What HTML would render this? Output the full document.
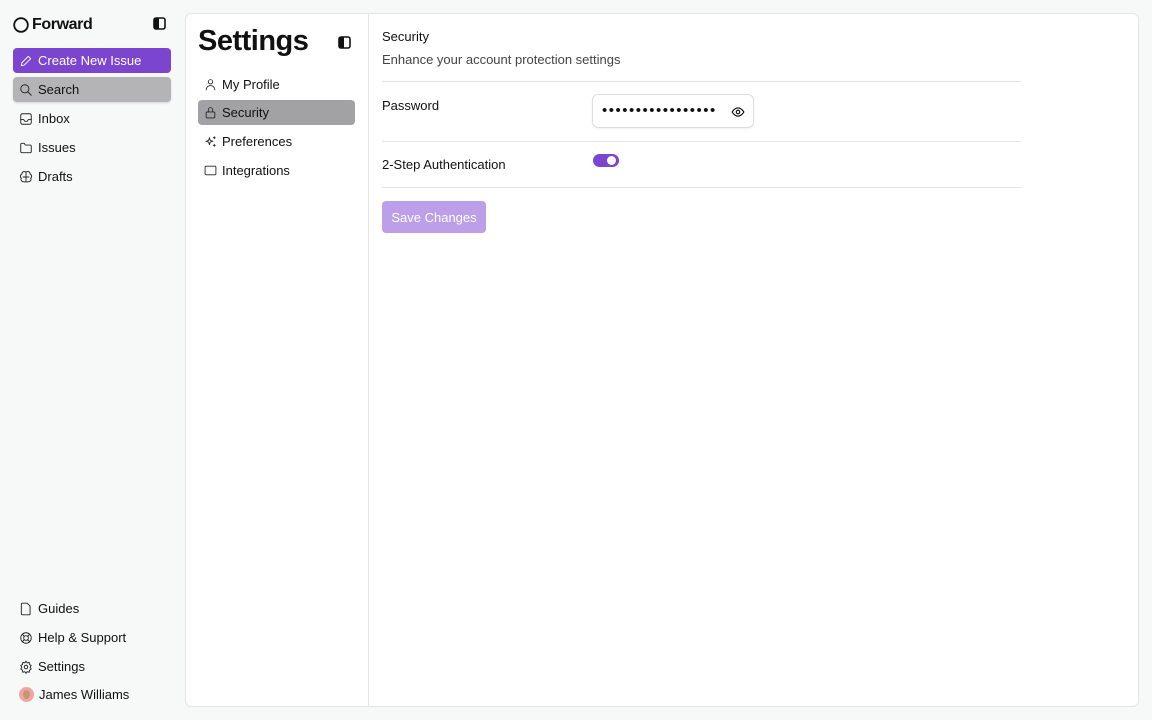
<!DOCTYPE html>
<html><head><style>
*{box-sizing:border-box;margin:0;padding:0}
body{width:1152px;height:720px;background:#f7f8f8;font-family:"Liberation Sans",sans-serif;color:#111;position:relative;overflow:hidden;font-size:13px}
.a{position:absolute}
.nav{position:absolute;left:13px;width:158px;height:25px;border-radius:4px;display:flex;align-items:center;padding-left:6px;gap:5px;font-size:13px}
.nav svg{width:14px;height:14px;fill:none;stroke:#222;stroke-width:1.6;stroke-linecap:round;stroke-linejoin:round}
.sn{position:absolute;left:198px;width:157px;height:25px;border-radius:4px;display:flex;align-items:center;padding-left:6px;gap:5px;font-size:13px}
.sn svg{width:13px;height:13px;fill:none;stroke:#222;stroke-width:1.6;stroke-linecap:round;stroke-linejoin:round}
.hr{position:absolute;left:382px;width:639px;height:1px;background:#e4e4e4}
</style></head><body>
<div class="a" style="left:13px;top:16px;display:flex;align-items:center;gap:3px;font-size:16px;font-weight:bold;letter-spacing:-0.4px">
<svg width="16" height="16"><circle cx="8" cy="8" r="6.8" fill="none" stroke="#111" stroke-width="1.8"/></svg>Forward</div>
<svg class="a" style="left:153px;top:17px" width="13" height="13"><rect x="1" y="1" width="11" height="11" rx="2" fill="none" stroke="#111" stroke-width="1.6"/><rect x="1" y="1" width="5" height="11" fill="#111"/></svg>
<div class="nav" style="top:48px;background:#7c45d0;color:#fff"><svg viewBox="0 0 24 24" style="stroke:#fff"><path d="M4 20l1-5L16 4l4 4L9 19z"/></svg>Create New Issue</div>
<div class="nav" style="top:77px;background:#b4b4b6;box-shadow:0 1px 2px rgba(0,0,0,.15)"><svg viewBox="0 0 24 24"><circle cx="10" cy="10" r="7"/><path d="M15 15l6 6"/></svg>Search</div>
<div class="nav" style="top:106px"><svg viewBox="0 0 24 24"><rect x="3" y="3" width="18" height="18" rx="3"/><path d="M3 13h5l2 3h4l2-3h5"/></svg>Inbox</div>
<div class="nav" style="top:135px"><svg viewBox="0 0 24 24"><path d="M3 6a2 2 0 012-2h4l2 3h8a2 2 0 012 2v9a2 2 0 01-2 2H5a2 2 0 01-2-2z"/></svg>Issues</div>
<div class="nav" style="top:164px"><svg viewBox="0 0 24 24"><path d="M12 4a4 4 0 00-7 3 4 4 0 00-1 7 4 4 0 004 6 4 4 0 004 0 4 4 0 004 0 4 4 0 004-6 4 4 0 00-1-7 4 4 0 00-7-3zM12 4v16M7 12h10"/></svg>Drafts</div>
<div class="nav" style="top:596px"><svg viewBox="0 0 24 24"><path d="M6 2h8l5 5v13a2 2 0 01-2 2H6a2 2 0 01-2-2V4a2 2 0 012-2z"/></svg>Guides</div>
<div class="nav" style="top:625px"><svg viewBox="0 0 24 24"><circle cx="12" cy="12" r="9"/><circle cx="12" cy="12" r="4"/><path d="M5.6 5.6l3.6 3.6M14.8 14.8l3.6 3.6M14.8 9.2l3.6-3.6M5.6 18.4l3.6-3.6"/></svg>Help &amp; Support</div>
<div class="nav" style="top:654px"><svg viewBox="0 0 24 24"><circle cx="12" cy="12" r="3"/><path d="M12 2l2 3 3.5-1 .5 3.5 3 2-2 3 2 3-3 2-.5 3.5-3.5-1-2 3-2-3-3.5 1-.5-3.5-3-2 2-3-2-3 3-2L6.5 4 10 5z"/></svg>Settings</div>
<div class="nav" style="top:682px"><span style="width:15px;height:15px;border-radius:50%;background:#f0a6a0;display:inline-block;position:relative"><span style="position:absolute;left:4px;top:3px;width:7px;height:9px;border-radius:50%;background:#c99572"></span></span>James Williams</div>

<div class="a" style="left:185px;top:13px;width:954px;height:694px;background:#fff;border:1px solid #e4e4e4;border-radius:6px"></div>
<div class="a" style="left:368px;top:14px;width:1px;height:692px;background:#e4e4e4"></div>
<div class="a" style="left:198px;top:25px;font-size:29px;font-weight:bold;letter-spacing:-0.5px">Settings</div>
<svg class="a" style="left:338px;top:36px" width="13" height="13"><rect x="1" y="1" width="11" height="11" rx="2" fill="none" stroke="#111" stroke-width="1.6"/><rect x="1" y="1" width="5" height="11" fill="#111"/></svg>
<div class="sn" style="top:72px"><svg viewBox="0 0 24 24"><circle cx="12" cy="7" r="4"/><path d="M4 22a8 8 0 0116 0"/></svg>My Profile</div>
<div class="sn" style="top:100px;background:#a2a2a5"><svg viewBox="0 0 24 24"><rect x="4" y="11" width="16" height="11" rx="2"/><path d="M8 11V7a4 4 0 018 0v4"/></svg>Security</div>
<div class="sn" style="top:129px"><svg viewBox="0 0 24 24"><path d="M10 5l1.5 5 5 1.5-5 1.5L10 18l-1.5-5-5-1.5 5-1.5zM19 3v4M17 5h4M19 17v4M17 19h4"/></svg>Preferences</div>
<div class="sn" style="top:158px"><svg viewBox="0 0 24 24"><rect x="2" y="4" width="20" height="16" rx="2"/></svg>Integrations</div>

<div class="a" style="left:382px;top:29px">Security</div>
<div class="a" style="left:382px;top:52px;color:#444">Enhance your account protection settings</div>
<div class="hr" style="top:81px"></div>
<div class="a" style="left:382px;top:98px">Password</div>
<div class="a" style="left:592px;top:94px;width:162px;height:34px;border:1px solid #ddd;border-radius:6px;box-shadow:0 1px 2px rgba(0,0,0,.06)">
<div class="a" style="left:9px;top:7px;font-size:15px;letter-spacing:1.5px;white-space:nowrap">•••••••••••••••••</div>
<svg class="a" style="left:138px;top:10px" width="14" height="14" viewBox="0 0 24 24" fill="none" stroke="#111" stroke-width="2"><path d="M2 12s4-7 10-7 10 7 10 7-4 7-10 7S2 12 2 12z"/><circle cx="12" cy="12" r="3"/></svg></div>
<div class="hr" style="top:141px"></div>
<div class="a" style="left:382px;top:157px">2-Step Authentication</div>
<div class="a" style="left:593px;top:154px;width:26px;height:13px;border-radius:7px;background:#7c45d0"><div class="a" style="left:14px;top:2px;width:9px;height:9px;border-radius:50%;background:#fff"></div></div>
<div class="hr" style="top:187px"></div>
<div class="a" style="left:382px;top:201px;width:104px;height:32px;border-radius:4px;background:#bc9fe8;color:#fff;display:flex;align-items:center;justify-content:center">Save Changes</div>
</body></html>
